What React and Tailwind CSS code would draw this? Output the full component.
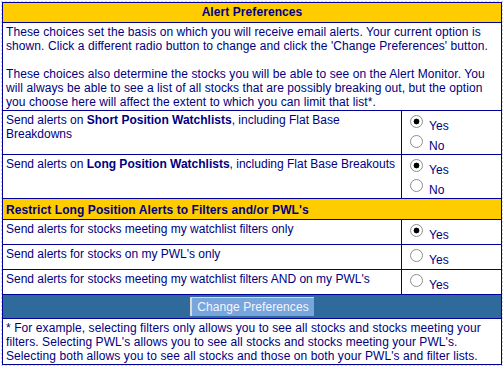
import React from "react";

// Radio button drawn like the old Windows classic control
function Radio({ name, checked }) {
  return (
    <input
      type="radio"
      name={name}
      defaultChecked={checked}
      className="appearance-none m-0 mt-[1px] w-[13px] h-[13px] shrink-0 rounded-full border border-[#8e8e8e] bg-white checked:bg-[radial-gradient(circle,#000_0_2.6px,#fff_3.2px)]"
    />
  );
}

function Choice({ name, label, checked }) {
  return (
    <label className="flex items-start h-[20px]">
      <Radio name={name} checked={checked} />
      <span className="ml-[6px] mt-[5px]">{label}</span>
    </label>
  );
}

function PrefRow({ height, name, children, yesNo, checked }) {
  return (
    <div className={`flex border-t border-[#000099] ${height}`}>
      <div className="w-[399px] border-r border-[#000099] p-[2px] pl-[3px] whitespace-nowrap tracking-[0px]">
        {children}
      </div>
      <div className="flex-1 pt-[3px] pl-[8px]">
        <Choice name={name} label="Yes" checked={checked} />
        {yesNo && <Choice name={name} label="No" checked={!checked} />}
      </div>
    </div>
  );
}

export default function App() {
  return (
    <div className="min-h-screen p-[2px] bg-white bg-[radial-gradient(circle,#d4d4dc_0.7px,transparent_1px)] bg-[length:4px_4px]">
      <div className="w-[500px] border-l border-r border-b border-[#000099] bg-white text-[12px] leading-[14px] text-[#000080] font-['Liberation_Sans',Arial,sans-serif] tracking-[0.08px]">
        {/* En-tête */}
        <div className="h-[20px] border-t border-[#000099] bg-[#ffcc00] pt-[2px] text-center font-bold">
          Alert Preferences
        </div>

        {/* Introduction */}
        <div className="h-[88px] border-t border-[#000099] p-[2px] pl-[3px] whitespace-nowrap">
          These choices set the basis on which you will receive email alerts. Your current option is
          <br />
          shown. Click a different radio button to change and click the 'Change Preferences' button.
          <br />
          <br />
          These choices also determine the stocks you will be able to see on the Alert Monitor. You
          <br />
          will always be able to see a list of all stocks that are possibly breaking out, but the option
          <br />
          you choose here will affect the extent to which you can limit that list*.
        </div>

        <PrefRow height="h-[44px]" name="short" yesNo checked>
          Send alerts on <b>Short Position Watchlists</b>, including Flat Base
          <br />
          Breakdowns
        </PrefRow>
        <PrefRow height="h-[44px]" name="long" yesNo checked>
          Send alerts on <b>Long Position Watchlists</b>, including Flat Base Breakouts
        </PrefRow>

        {/* Sous-titre */}
        <div className="h-[21px] border-t border-[#000099] bg-[#ffcc00] pt-[4px] pl-[3px] font-bold">
          Restrict Long Position Alerts to Filters and/or PWL's
        </div>

        <PrefRow height="h-[25px]" name="restrict" checked>
          Send alerts for stocks meeting my watchlist filters only
        </PrefRow>
        <PrefRow height="h-[25px]" name="restrict">
          Send alerts for stocks on my PWL's only
        </PrefRow>
        <PrefRow height="h-[25px]" name="restrict">
          Send alerts for stocks meeting my watchlist filters AND on my PWL's
        </PrefRow>

        {/* Bouton */}
        <div className="h-[24px] border-t border-[#000099] bg-[#2f6a9d] flex items-center justify-center">
          <button className="w-[124px] h-[19px] bg-[#78a5db] text-[#f4f6ff] border-t border-l-2 border-[#d9d9d9] leading-[16px] pb-[1px]">
            Change Preferences
          </button>
        </div>

        {/* Note */}
        <div className="h-[46px] border-t border-[#000099] p-[2px] pl-[3px] whitespace-nowrap">
          * For example, selecting filters only allows you to see all stocks and stocks meeting your
          <br />
          filters. Selecting PWL's allows you to see all stocks and stocks meeting your PWL's.
          <br />
          Selecting both allows you to see all stocks and those on both your PWL's and filter lists.
        </div>
      </div>
    </div>
  );
}
